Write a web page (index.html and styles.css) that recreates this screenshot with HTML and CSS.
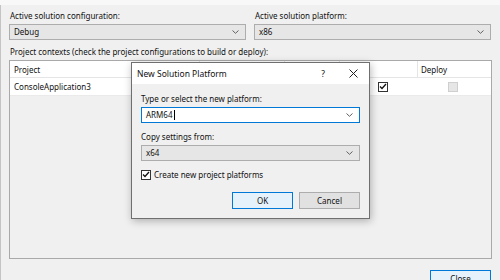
FILE: index.html
```html
<!DOCTYPE html>
<html>
<head>
<meta charset="utf-8">
<link rel="stylesheet" href="styles.css">
</head>
<body>
<div class="window">
  <div class="strip"></div>
  <div class="content">
    <div class="fields">
      <div class="field">
        <div class="label">Active solution configuration:</div>
        <div class="combo"><span>Debug</span><svg class="chev" width="7" height="4" viewBox="0 0 7 4"><path d="M0.5 0.5 L3.5 3.3 L6.5 0.5" fill="none" stroke="#606060" stroke-width="1"/></svg></div>
      </div>
      <div class="field">
        <div class="label">Active solution platform:</div>
        <div class="combo"><span>x86</span><svg class="chev" width="7" height="4" viewBox="0 0 7 4"><path d="M0.5 0.5 L3.5 3.3 L6.5 0.5" fill="none" stroke="#606060" stroke-width="1"/></svg></div>
      </div>
    </div>
    <div class="label ctx">Project contexts (check the project configurations to build or deploy):</div>
    <div class="table">
      <div class="trow head">
        <div class="c c1">Project</div>
        <div class="c c2"></div>
        <div class="c c3"></div>
        <div class="c c4"></div>
        <div class="c c5">Deploy</div>
      </div>
      <div class="trow body">
        <div class="c c1">ConsoleApplication3</div>
        <div class="c c2"></div>
        <div class="c c3"></div>
        <div class="c c4"><span class="cb checked"><svg width="8" height="7" viewBox="0 0 8 7"><path d="M1 3.5 L3 5.5 L7 1" fill="none" stroke="#111" stroke-width="1.3"/></svg></span></div>
        <div class="c c5"><span class="cb disabled"></span></div>
      </div>
    </div>
    <div class="footer">
      <button class="btn close">Close</button>
    </div>
  </div>

  <div class="dialog">
    <div class="titlebar">
      <span class="title">New Solution Platform</span>
      <span class="help">?</span>
      <svg class="x" width="9" height="9" viewBox="0 0 9 9"><path d="M0.5 0.5 L8.5 8.5 M8.5 0.5 L0.5 8.5" stroke="#222" stroke-width="1"/></svg>
    </div>
    <div class="dbody">
      <div class="label">Type or select the new platform:</div>
      <div class="combo edit"><span>ARM64<i class="caret"></i></span><svg class="chev" width="7" height="4" viewBox="0 0 7 4"><path d="M0.5 0.5 L3.5 3.3 L6.5 0.5" fill="none" stroke="#606060" stroke-width="1"/></svg></div>
      <div class="label">Copy settings from:</div>
      <div class="combo"><span>x64</span><svg class="chev" width="7" height="4" viewBox="0 0 7 4"><path d="M0.5 0.5 L3.5 3.3 L6.5 0.5" fill="none" stroke="#606060" stroke-width="1"/></svg></div>
      <div class="check">
        <span class="cb checked"><svg width="8" height="7" viewBox="0 0 8 7"><path d="M1 3.5 L3 5.5 L7 1" fill="none" stroke="#111" stroke-width="1.3"/></svg></span>
        <span>Create new project platforms</span>
      </div>
      <div class="buttons">
        <button class="btn ok">OK</button>
        <button class="btn">Cancel</button>
      </div>
    </div>
  </div>
</div>
</body>
</html>
```
FILE: styles.css
```css
* { box-sizing: border-box; }
html, body { margin: 0; padding: 0; }
body {
  width: 500px;
  height: 280px;
  overflow: hidden;
  background: #f0f0f0;
  font-family: "Noto Sans", "Open Sans", sans-serif;
  font-size: 8px;
  color: #111;
}
.window { position: relative; height: 280px; }
.strip { height: 5px; background: #f8f8f8; }
.content {
  border-left: 1px solid #c4c4c4;
  height: 275px;
  padding: 5px 8px 0 8px;
}
.fields {
  display: grid;
  grid-template-columns: 237px 237px;
  column-gap: 8px;
}
.label { height: 12px; line-height: 12px; white-space: nowrap; margin-left: 1px; }
.combo {
  margin-top: 2px;
  height: 16px;
  border: 1px solid #adadad;
  background: #e6e6e6;
  display: flex;
  align-items: center;
  justify-content: space-between;
  padding: 0 6px 0 4px;
  line-height: 14px;
}
.combo .chev { flex: none; }
.ctx { margin-top: 6px; }
.table {
  margin-top: 2px;
  height: 199px;
  border: 1px solid #a9a9a9;
  background: #f0f0f0;
}
.trow { display: flex; }
.trow.head { height: 17px; background: #fff; border-bottom: 1px solid #e5e5e5; }
.trow.body { height: 18px; background: #fff; border-bottom: 1px solid #eaeaea; }
.c { display: flex; align-items: center; padding-left: 4px; white-space: nowrap; border-right: 1px solid #e5e5e5; }
.c1 { width: 190px; }
.c2 { width: 85px; }
.c3 { width: 55px; }
.c4 { width: 78px; }
.c5 { flex: 1; border-right: none; padding-left: 4px; }
.body .c4 { padding-left: 38px; border-right: none; }
.body .c5 { padding-left: 30px; }
.head .c5 { padding-left: 3px; }
.cb {
  width: 10px; height: 10px;
  border: 1px solid #333;
  background: #fff;
  display: inline-flex;
  align-items: center;
  justify-content: center;
}
.cb.disabled { border-color: #cfcfcf; background: #e6e6e6; }
.footer { display: flex; justify-content: flex-end; margin-top: 11px; padding-right: 1px; }
.btn {
  font: inherit;
  color: #111;
  height: 17px;
  width: 61px;
  padding: 0;
  border: 1px solid #adadad;
  background: #e1e1e1;
}
.btn.close, .btn.ok { border-color: #0078d7; background: #e5f1fb; }

.dialog {
  position: absolute;
  left: 131px;
  top: 62px;
  width: 239px;
  height: 157px;
  border: 1px solid #6f6f6f;
  background: #f0f0f0;
  box-shadow: 1px 2px 8px rgba(0,0,0,0.28);
}
.titlebar {
  height: 21px;
  background: #fff;
  display: flex;
  align-items: center;
  padding-left: 5px;
  padding-right: 11px;
}
.title { flex: 1; font-size: 8.5px; }
.help { font-size: 8.5px; margin-right: 24px; }
.x { flex: none; }
.dbody { padding: 9px 9px 0 9px; }
.dbody .label { margin-left: 0; }
.dbody .combo { margin-bottom: 8px; }
.combo.edit { background: #fff; border-color: #0078d7; }
.caret { display: inline-block; width: 1px; height: 10px; background: #000; vertical-align: -2px; margin-left: 1px; }
.check { display: flex; align-items: center; gap: 3px; margin-top: 2px; height: 11px; }
.buttons { display: flex; justify-content: flex-end; gap: 6px; margin-top: 12px; }
```
